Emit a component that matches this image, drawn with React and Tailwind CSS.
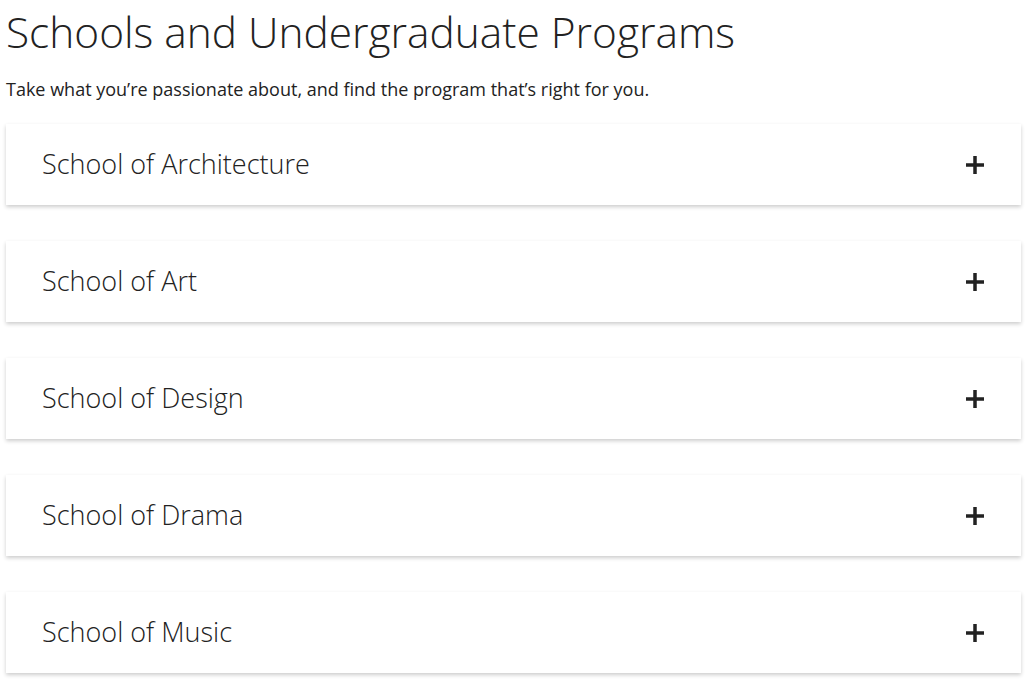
import React from 'react';

const schools = [
  'School of Architecture',
  'School of Art',
  'School of Design',
  'School of Drama',
  'School of Music',
];

const PlusIcon = () => (
  <svg width="18" height="18" viewBox="0 0 18 18" className="text-[#222]">
    <rect x="7.25" y="0" width="3.5" height="18" fill="currentColor" />
    <rect x="0" y="7.25" width="18" height="3.5" fill="currentColor" />
  </svg>
);

const App = () => {
  return (
    <div className="min-h-screen bg-white px-[6px] pt-[6px] font-['Open_Sans',sans-serif] text-[#222]">
      <h1 className="text-[42.4px] font-light leading-[52px]">
        Schools and Undergraduate Programs
      </h1>
      <p className="mt-[19px] text-[18px] leading-[24px] text-[#222]">
        Take what you’re passionate about, and find the program that’s right for you.
      </p>
      <div className="mt-[23px] mr-[3px] flex flex-col gap-[36px]">
        {schools.map((name) => (
          <button
            key={name}
            type="button"
            className="flex h-[81px] w-full items-center justify-between bg-white pl-[36px] pr-[37px] text-left shadow-[0_2px_4px_rgba(0,0,0,0.2)]"
          >
            <span className="text-[27px] font-light text-[#222]">{name}</span>
            <PlusIcon />
          </button>
        ))}
      </div>
    </div>
  );
};

export default App;
